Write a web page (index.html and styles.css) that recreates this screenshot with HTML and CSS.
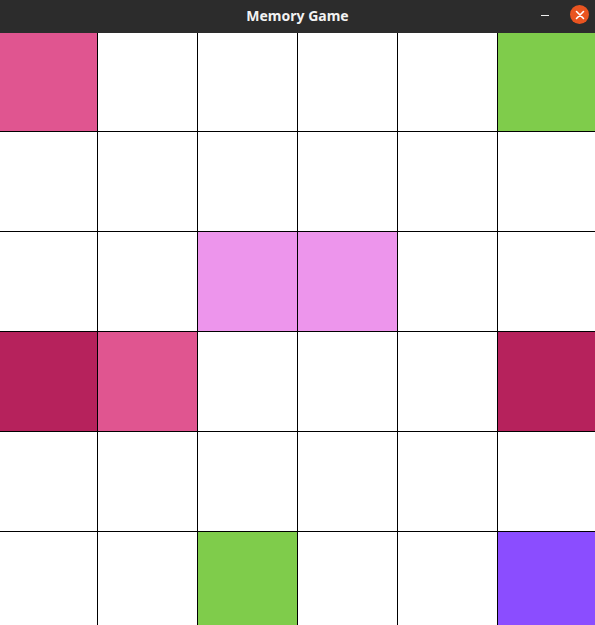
FILE: index.html
```html
<!DOCTYPE html>
<html>
<head>
<meta charset="utf-8">
<title>Memory Game</title>
<link rel="stylesheet" href="styles.css">
</head>
<body>
<div class="window">
  <div class="titlebar">
    <span class="title">Memory Game</span>
    <div class="controls">
      <span class="minimize"></span>
      <span class="close">
        <svg width="10" height="10" viewBox="0 0 10 10"><path d="M1.5 1.5 L8.5 8.5 M8.5 1.5 L1.5 8.5" stroke="#fff" stroke-width="1.6" stroke-linecap="round"/></svg>
      </span>
    </div>
  </div>
  <div class="board">
    <div class="cell pink"></div><div class="cell"></div><div class="cell"></div><div class="cell"></div><div class="cell"></div><div class="cell green"></div>
    <div class="cell"></div><div class="cell"></div><div class="cell"></div><div class="cell"></div><div class="cell"></div><div class="cell"></div>
    <div class="cell"></div><div class="cell"></div><div class="cell violet"></div><div class="cell violet"></div><div class="cell"></div><div class="cell"></div>
    <div class="cell crimson"></div><div class="cell pink"></div><div class="cell"></div><div class="cell"></div><div class="cell"></div><div class="cell crimson"></div>
    <div class="cell"></div><div class="cell"></div><div class="cell"></div><div class="cell"></div><div class="cell"></div><div class="cell"></div>
    <div class="cell"></div><div class="cell"></div><div class="cell green"></div><div class="cell"></div><div class="cell"></div><div class="cell purple"></div>
  </div>
</div>
</body>
</html>
```
FILE: styles.css
```css
html, body {
  margin: 0;
  padding: 0;
  background: #ffffff;
}
.window {
  width: 595px;
  height: 625px;
  overflow: hidden;
  display: flex;
  flex-direction: column;
}
.titlebar {
  height: 33px;
  flex: none;
  background: #2c2c2c;
  position: relative;
  display: flex;
  align-items: center;
  justify-content: center;
}
.title {
  font-family: "Noto Sans", "DejaVu Sans", sans-serif;
  font-weight: bold;
  font-size: 14px;
  color: #f2f2f2;
  margin-top: -2px;
}
.controls {
  position: absolute;
  right: 6px;
  top: 5px;
  display: flex;
  align-items: center;
  gap: 21px;
}
.minimize {
  width: 8px;
  height: 1px;
  background: #f0f0f0;
  margin-top: 2px;
}
.close {
  width: 19px;
  height: 19px;
  border-radius: 50%;
  background: #e95420;
  display: flex;
  align-items: center;
  justify-content: center;
}
.board {
  flex: 1;
  display: grid;
  grid-template-columns: 97px 99px 99px 99px 99px 97px;
  grid-template-rows: 98px 99px 99px 99px 99px 93px;
  gap: 1px;
  background: #000000;
}
.cell { background: #ffffff; }
.pink { background: #e05590; }
.green { background: #7fcc4b; }
.violet { background: #ed95ec; }
.crimson { background: #b6225c; }
.purple { background: #8b4dff; }
```
